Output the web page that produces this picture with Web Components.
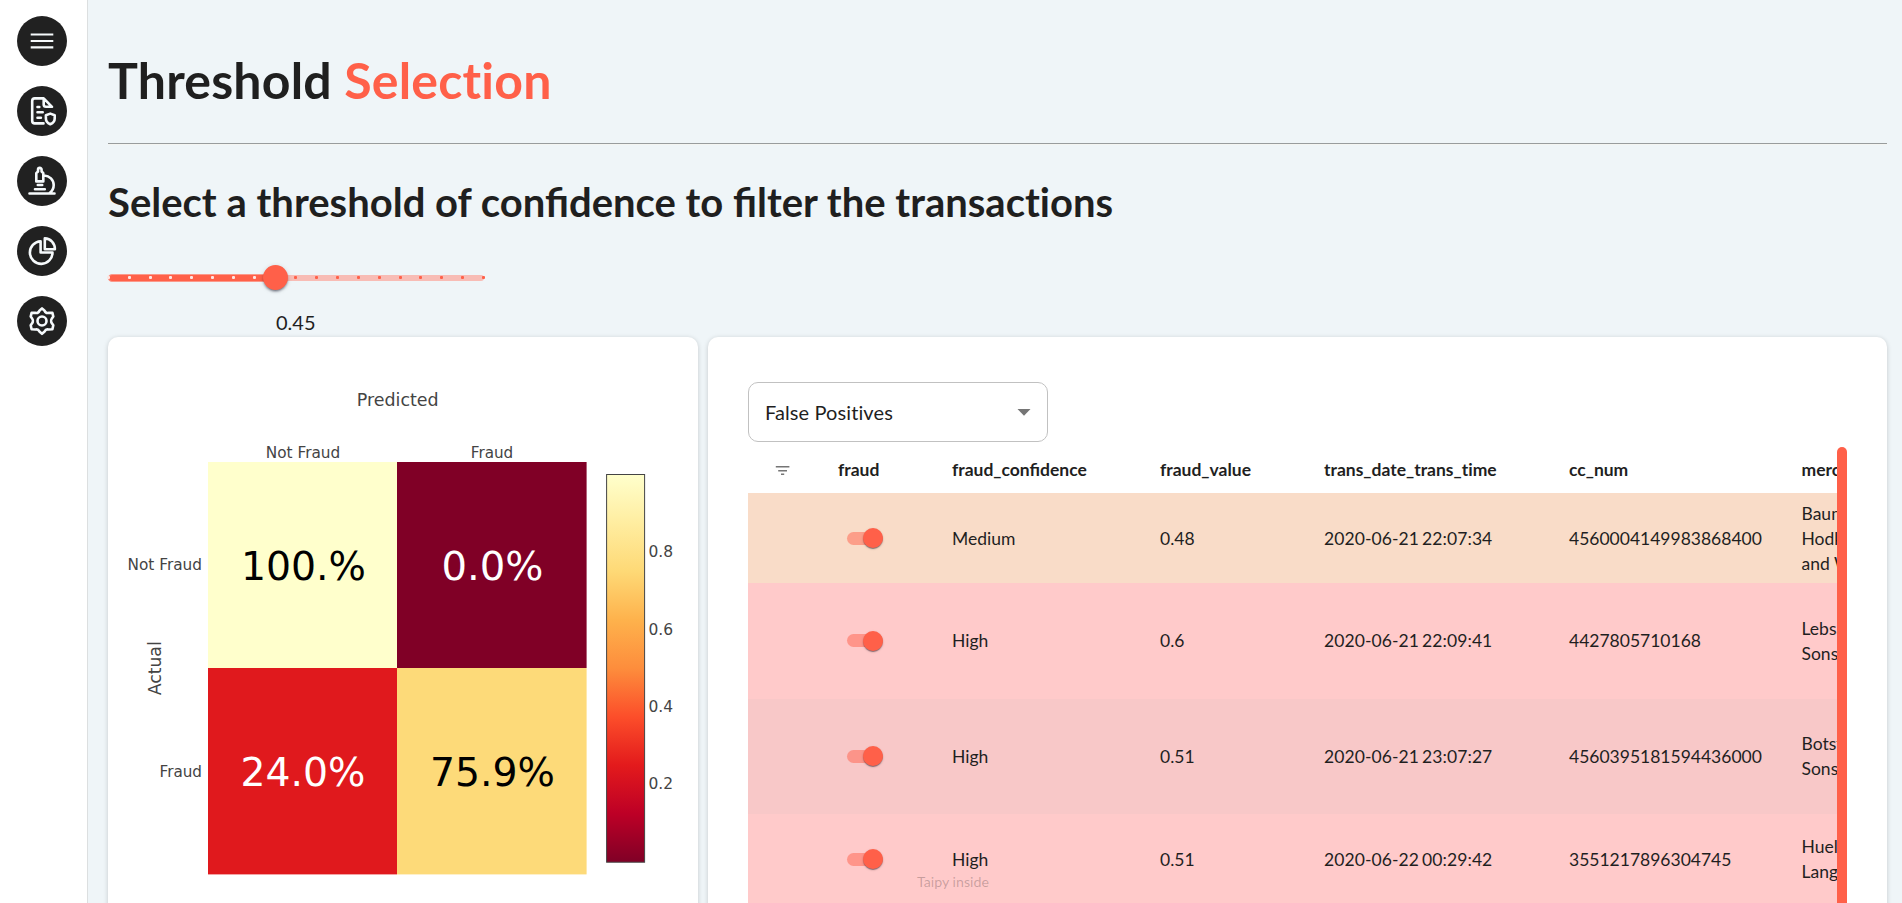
<!DOCTYPE html>
<html lang="en">
<head>
<meta charset="utf-8">
<title>Threshold Selection</title>
<style>
html,body{margin:0;height:100%;overflow:hidden;background:#eff5f8;font-family:Lato,"Liberation Sans",sans-serif;color:#1f1f1f}
</style>
</head>
<body>
<fraud-app></fraud-app>
<script>
const ACCENT = '#ff6049';
function define(name, html, setup) {
  customElements.define(name, class extends HTMLElement {
    connectedCallback() {
      if (this.shadowRoot) return;
      const root = this.attachShadow({mode: 'open'});
      const t = document.createElement('template');
      t.innerHTML = typeof html === 'function' ? html(this) : html;
      root.append(t.content.cloneNode(true));
      if (setup) setup(this, root);
    }
  });
}

const ICONS = {
  menu: '<path stroke-width="2.2" stroke-linecap="butt" d="M13.7 18.5h22.6M13.7 25h22.6M13.7 31.3h22.6"/>',
  report: '<path d="M26.5 37.4H17.8a2.6 2.6 0 0 1-2.6-2.6V15a2.6 2.6 0 0 1 2.6-2.6h8.9l8.3 8.4h-6a2.3 2.3 0 0 1-2.3-2.3v-6M20.5 21h1.8M20.5 26.3h5.2M20.5 31.7h3.4M33.3 27.6l4.4 1.6v3.3c0 2.6-1.7 4.6-4.4 5.8-2.7-1.2-4.4-3.2-4.4-5.8v-3.3z"/>',
  lab: '<path d="M19.3 25.4v-8.2l1.7-1.7v-1.8a1.8 1.8 0 0 1 3.6 0v1.8l1.7 1.7v8.2zM20.8 29h4.4M18 33.2h9.8M12.5 37.5h25M27.2 19.5c5.3.2 9.5 4.3 9.5 9.6 0 3.5-1.8 6.5-4.4 8.2"/>',
  pie: '<path d="M23.6 15.3a11.3 11.3 0 1 0 11.9 11.2H23.6zM27.8 12.4v10.8h10.1c0-6-4.3-10.8-10.1-10.8z"/>',
  gear: '<circle cx="25" cy="25" r="4.5"/><path d="M22.4 14.7 25 12.4l2.6 2.3c.8 2 1.7 2.7 3.8 2.2l4-.2.9 3.9-1.6 2.2c-.7.9-.7 3.3 0 4.3l1.6 2.2-.9 3.9-4 .3c-2.1-.5-3 .2-3.8 2.1L25 37.8l-2.6-2.2c-.8-1.9-1.7-2.6-3.8-2.1l-4-.3-.9-3.9 1.6-2.2c.7-1 .7-3.4 0-4.3l-1.6-2.2.9-3.9 4 .2c2.1.5 3-.2 3.8-2.2z"/>'
};

define('nav-button', el => `<style>
:host{display:block;width:50px;height:50px;border-radius:50%;background:#212121}
svg{display:block;fill:none;stroke:#f6fafc;stroke-width:2.600;stroke-linecap:round;stroke-linejoin:round}
</style><svg width="50" height="50" viewBox="0 0 50 50">${ICONS[el.getAttribute('icon')]}</svg>`);

define('side-nav', `<style>
:host{display:flex;flex-direction:column;gap:20px;width:87px;flex:none;box-sizing:content-box;padding-top:16px;background:#fff;border-right:1px solid #dcdfe0}
nav-button{margin-left:17px}
</style><nav-button icon="menu"></nav-button><nav-button icon="report"></nav-button><nav-button icon="lab"></nav-button><nav-button icon="pie"></nav-button><nav-button icon="gear"></nav-button>`);

define('page-title', `<style>
:host{display:block;height:114px;padding-top:29px;border-bottom:1px solid #989c9d;box-shadow:0 1px #f4f5f2}
h1{margin:0;font-size:50px;line-height:103px;font-weight:700;white-space:nowrap;font-variant-ligatures:none;letter-spacing:.200px}
::slotted(em){font-style:normal;color:${ACCENT}}
</style><h1><slot></slot></h1>`);

define('value-slider', `<style>
:host{display:block;width:376px;height:107px}
.bar{display:grid;height:95px;align-items:center;box-sizing:border-box}
.bar>*{grid-area:1/1}
.rail{height:6px;border-radius:3px;background:#f8bcb5}
.fill{height:6px;width:167px;border:1px solid #fb998b;border-radius:4px;background:${ACCENT}}
.marks{display:flex;justify-content:space-between;margin:0 -1px}
.marks i{width:3px;height:3px;border-radius:1px;background:${ACCENT}}
.marks i.on{background:#fde6e3}
.thumb{width:25px;height:25px;margin-left:154.5px;border-radius:50%;background:${ACCENT};box-shadow:0 3px 1px -2px #0003,0 2px 2px #0024,0 1px 5px #0002}
.value{font-size:20px;line-height:24px;margin:-15px 0 0 168px}
</style><div class="bar"><div class="rail"></div><div class="fill"></div><div class="marks"></div><div class="thumb"></div></div><div class="value"><slot></slot></div>`,
(el, root) => {
  const m = root.querySelector('.marks');
  for (let i = 0; i < 19; i++) { const d = document.createElement('i'); if (i < 8) d.className = 'on'; m.append(d); }
});

define('paper-card', `<style>
:host{display:block;box-sizing:border-box;height:620px;background:#fff;border-radius:10px;box-shadow:0 1px 5px #0000002e;overflow:hidden}
</style><slot></slot>`);

define('confusion-matrix', () => {
  const stops = ['ffffcc','ffeda0','fed976','feb24c','fd8d3c','fc4e2a','e31a1c','bd0026','800026'];
  const t = (x, y, w, s, txt, anchor = 'middle', fill = '#444', extra = '') =>
    `<text x="${x}" y="${y}" font-size="${s}" fill="${fill}" text-anchor="${anchor}" textLength="${w}" lengthAdjust="spacingAndGlyphs" ${extra}>${txt}</text>`;
  return `<style>:host{display:block}svg{display:block}text{font-family:Verdana,"DejaVu Sans",sans-serif}</style>
<svg width="590" height="566" viewBox="108 337 590 566">
<defs><linearGradient id="g" x1="0" y1="0" x2="0" y2="1">${stops.map((c, i) => `<stop offset="${i / 8}" stop-color="#${c}"/>`).join('')}</linearGradient></defs>
<rect x="208" y="462" width="189" height="206" fill="#ffffcc"/>
<rect x="397" y="462" width="189.6" height="206" fill="#800026"/>
<rect x="208" y="668" width="189" height="206.4" fill="#e0191d"/>
<rect x="397" y="668" width="189.6" height="206.4" fill="#fdda79"/>
<rect x="606.6" y="474.5" width="38" height="387.7" fill="url(#g)" stroke="#444" stroke-width="1"/>
${t(397.7, 405.5, 82, 17, 'Predicted')}
${t(303, 457.7, 74.5, 15, 'Not Fraud')}${t(492, 457.7, 42.5, 15, 'Fraud')}
${t(202, 569.7, 74.5, 15, 'Not Fraud', 'end')}${t(202, 776.5, 42.5, 15, 'Fraud', 'end')}
${t(0, 0, 54, 17, 'Actual', 'middle', '#444', 'transform="translate(161 668.3) rotate(-90)"')}
${t(303.5, 579.7, 125, 39.5, '100.%', 'middle', '#000')}${t(492.5, 579.7, 102, 39.5, '0.0%', 'middle', '#fff')}
${t(303, 785.5, 125, 39.5, '24.0%', 'middle', '#fff')}${t(492.5, 785.5, 125, 39.5, '75.9%', 'middle', '#000')}
${t(648.5, 557, 24.6, 15, '0.8', 'start')}${t(648.5, 634.5, 24.6, 15, '0.6', 'start')}${t(648.5, 711.5, 24.6, 15, '0.4', 'start')}${t(648.5, 789.3, 24.6, 15, '0.2', 'start')}
</svg>`;
});

define('select-box', `<style>
:host{display:flex;align-items:center;justify-content:space-between;box-sizing:border-box;width:300px;height:60px;border:1px solid #c1c1c1;border-radius:10px;padding:0 16px 1px 16px;font-size:20px;font-variant-ligatures:none;letter-spacing:.100px}
svg{display:block;margin-top:1px}
</style><span><slot></slot></span><svg width="14" height="9" viewBox="0 0 14 9"><path fill="#757575" d="M.5 1h13L7 7.7z"/></svg>`);

define('toggle-switch', `<style>
:host{display:flex;align-items:center;justify-content:flex-end;width:36px;height:13px;border-radius:7px;background:#ff604980}
i{width:20px;height:20px;border-radius:50%;background:${ACCENT};box-shadow:0 2px 1px -1px #0003,0 1px 1px #0024,0 1px 3px #0002}
</style><i></i>`);

define('table-row', el => {
  const cells = el.getAttribute('cells').split('|');
  const head = el.hasAttribute('head');
  const first = head
    ? '<svg width="15" height="11" viewBox="0 0 15 11"><path stroke="#757575" stroke-width="1.5" d="M.8 1.7h13.6M3.2 5.7h8.8M6 9.3h3.2"/></svg>'
    : '';
  return `<style>
:host{display:grid;grid-template-columns:90px 114px 208px 164px 245px 232.500px 200px;align-items:center;width:1260px;box-sizing:border-box;font-size:17.500px;line-height:25px}
:host([head]) .c{font-weight:700;padding-bottom:1px}
svg{display:block;margin:0 0 0 27px}
.c{white-space:pre-line}
.c.date{font-variant-ligatures:none}
:host(:not([head])) .date{word-spacing:-1.500px;letter-spacing:.080px}
toggle-switch{margin-left:9px}
</style><div>${first}</div><div class="c">${head ? cells.shift() : '<toggle-switch></toggle-switch>'}</div>${cells.map((c, i) => `<div class="c${i === 2 ? ' date' : ''}">${c.replace(/\//g, '\n')}</div>`).join('')}`;
});

define('data-table', `<style>
:host{display:flex;width:1099px;height:465px;margin-top:5px}
.view{width:1089px;overflow:hidden}
.bar{width:10px;background:${ACCENT};border-radius:5px 5px 0 0}
table-row{height:115.500px}
table-row[head]{height:46px}
.short{height:90px}
.mid{background:#f9dcc8}.high{background:#ffcaca}.alt{background:#f8c8c8}
</style><div class="view">
<table-row head cells="fraud|fraud_confidence|fraud_value|trans_date_trans_time|cc_num|merchant"></table-row>
<table-row class="short mid" cells="Medium|0.48|2020-06-21 22:07:34|4560004149983868400|Baumbach,/Hodkiewicz/and Walsh"></table-row>
<table-row class="high" cells="High|0.6|2020-06-21 22:09:41|4427805710168|Lebsack and/Sons"></table-row>
<table-row class="alt" cells="High|0.51|2020-06-21 23:07:27|4560395181594436000|Botsford and/Sons"></table-row>
<table-row class="short high" cells="High|0.51|2020-06-22 00:29:42|3551217896304745|Huels-/Lang"></table-row>
</div><div class="bar"></div>`);

define('fraud-app', `<style>
:host{display:flex;height:903px;overflow:hidden}
main{flex:1;min-width:0;padding:0 15px 0 20px}
h2{margin:0;height:86px;font-size:40px;line-height:117px;white-space:nowrap}
h2 span{font-variant-ligatures:none}
.cards{display:grid;grid-template-columns:590px 1179px;gap:10px}
.table{padding:45px 0 0 40px}
.brand{position:absolute;left:917px;top:873px;font-size:14.200px;line-height:18px;color:#00000038;white-space:nowrap}
</style><side-nav></side-nav><main>
<page-title>Threshold <em>Selection</em></page-title>
<h2>Select a threshold of confidence to filter the <span>transactions</span></h2>
<value-slider>0.45</value-slider>
<div class="cards">
<paper-card><confusion-matrix></confusion-matrix></paper-card>
<paper-card class="table"><select-box>False Positives</select-box><data-table></data-table></paper-card>
</div></main><div class="brand">Taipy inside</div>`);
</script>
</body>
</html>
